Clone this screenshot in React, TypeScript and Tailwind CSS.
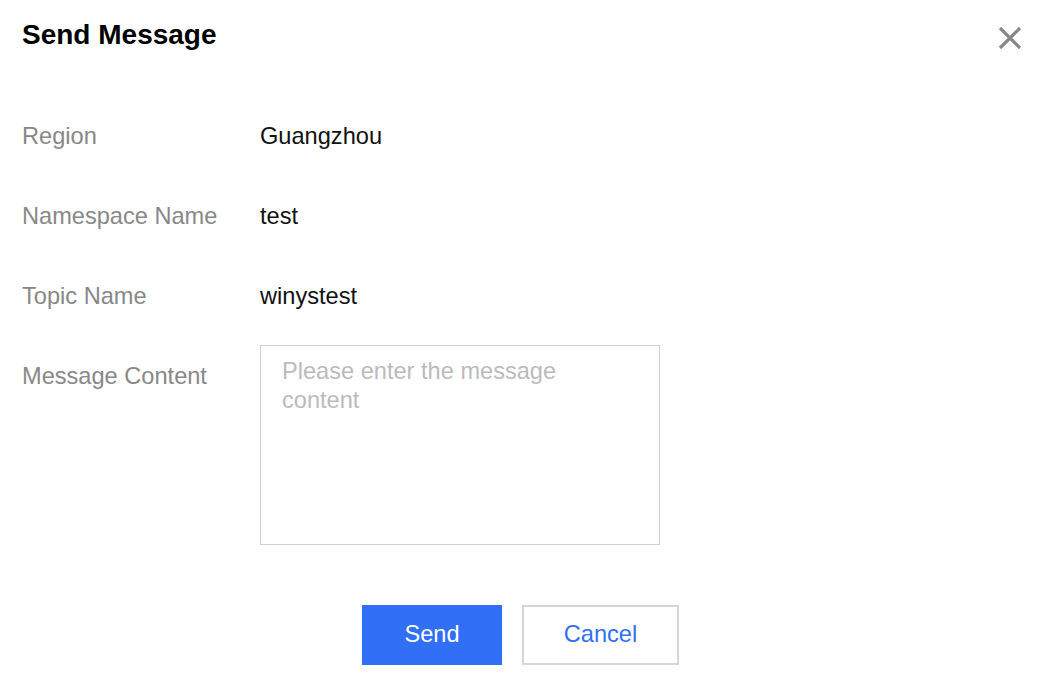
import React from 'react';

const rows = [
  { label: 'Region', value: 'Guangzhou' },
  { label: 'Namespace Name', value: 'test' },
  { label: 'Topic Name', value: 'winystest' },
];

export default function App() {
  return (
    <div className="w-[1042px] h-[690px] bg-white font-['Liberation_Sans',Arial,sans-serif]">
      {/* Header */}
      <div className="flex items-start justify-between pl-[22px] pr-[20px] pt-[17px]">
        <h2 className="text-[28px] leading-[36px] font-bold text-black">Send Message</h2>
        <button className="mt-[9px] text-[#888]" aria-label="close">
          <svg width="24" height="24" viewBox="0 0 24 24" fill="none" stroke="currentColor" strokeWidth="3.2">
            <path d="M2 2 L22 22 M22 2 L2 22" />
          </svg>
        </button>
      </div>

      {/* Form */}
      <div className="pl-[22px] mt-[68px] text-[23.6px]">
        {rows.map((row) => (
          <div key={row.label} className="flex leading-[30px] mb-[50px] last:mb-0">
            <div className="w-[238px] text-[#888]">{row.label}</div>
            <div className="text-[#111]">{row.value}</div>
          </div>
        ))}
        <div className="flex mt-[-16px]">
          <div className="w-[238px] text-[#888] leading-[30px] pt-[16px]">Message Content</div>
          <textarea
            className="w-[400px] h-[200px] border border-[#cbd0db] resize-none outline-none pl-[21px] pr-[20px] pt-[11px] text-[23.6px] leading-[29px] text-[#111] placeholder:text-[#bbb]"
            placeholder="Please enter the message content"
          />
        </div>
      </div>

      {/* Footer */}
      <div className="flex justify-center gap-[20px] mt-[60px] pr-[1px]">
        <button className="w-[140px] h-[60px] bg-[#306ff6] text-white text-[23.6px]">Send</button>
        <button className="w-[157px] h-[60px] border-2 border-[#d3d6de] bg-white text-[#306ff6] text-[23.6px]">Cancel</button>
      </div>
    </div>
  );
}
